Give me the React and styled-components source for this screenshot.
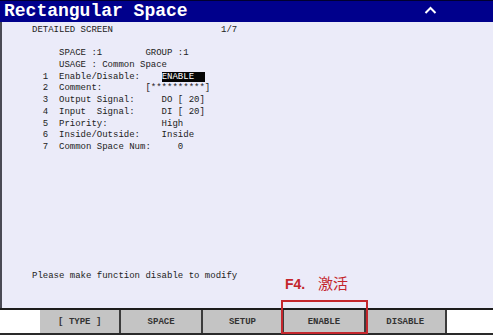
import React from "react";
import styled, { createGlobalStyle } from "styled-components";

const Global = createGlobalStyle`
  html, body { margin: 0; padding: 0; background: #ffffff; }
  body { width: 493px; height: 336px; overflow: hidden; }
`;

const Screen = styled.div`
  position: relative;
  width: 493px;
  height: 336px;
  display: flex;
  flex-direction: column;
  font-family: "Liberation Mono", "DejaVu Sans Mono", monospace;
  background: #ffffff;
`;

const TitleBar = styled.div`
  height: 21px;
  border-top: 1px solid #000030;
  background: #00008c;
  display: flex;
  align-items: center;
  justify-content: space-between;
  padding: 0 56px 0 4px;
  box-sizing: content-box;
`;

const Title = styled.div`
  color: #ffffff;
  font-weight: bold;
  font-size: 18px;
  line-height: 21px;
`;

const Caret = styled.svg`
  width: 13px;
  height: 8px;
  margin-top: -4px;
`;

const Body = styled.div`
  flex: 1;
  background: #ebebf9;
  border-left: 2px solid #4a4a55;
  padding: 3px 0 0 30px;
  display: flex;
  flex-direction: column;
  color: #222222;
  font-size: 9px;
`;

const Line = styled.div`
  height: 11.7px;
  line-height: 11.7px;
  white-space: pre;
`;

const Highlight = styled.span`
  background: #050505;
  color: #ffffff;
`;

const Spacer = styled.div`
  flex: 1;
`;

const Message = styled(Line)`
  margin-bottom: 25px;
`;

const Rule = styled.div`
  height: 2px;
  background: #1c1c1c;
`;

const KeyBar = styled.div`
  height: 23px;
  border-bottom: 2px solid #2a2a2a;
  display: grid;
  grid-template-columns: 40px repeat(5, 81.4px) 1fr;
  background: #ffffff;
  margin-bottom: 1px;
`;

const Blank = styled.div`
  background: #ffffff;
`;

const Key = styled.div`
  background: #c4c4c4;
  border-right: 2px solid #3c3c3c;
  display: flex;
  align-items: center;
  justify-content: center;
  font-size: 9px;
  font-weight: bold;
  color: #333333;
  white-space: pre;
  padding-top: 1px;
`;

const Callout = styled.div`
  position: absolute;
  left: 285px;
  top: 275px;
  color: #c4262c;
  font-family: "Liberation Sans", "Noto Sans CJK SC", sans-serif;
  font-weight: bold;
  font-size: 14px;
  line-height: 16px;
  white-space: pre;
`;

const CalloutCjk = styled.span`
  font-family: "Noto Sans CJK SC", sans-serif;
  font-weight: normal;
  font-size: 15px;
  margin-left: 5px;
`;

const RedBox = styled.div`
  position: absolute;
  left: 281px;
  top: 300px;
  width: 83px;
  height: 30px;
  border: 2px solid #c4262c;
`;

const lines = [
  "DETAILED SCREEN                    1/7",
  "",
  "     SPACE :1        GROUP :1",
  "     USAGE : Common Space",
  null,
  "  2  Comment:        [**********]",
  "  3  Output Signal:     DO [ 20]",
  "  4  Input  Signal:     DI [ 20]",
  "  5  Priority:          High",
  "  6  Inside/Outside:    Inside",
  "  7  Common Space Num:     0",
];

const keys = ["[ TYPE ]", "SPACE", "SETUP", "ENABLE", "DISABLE"];

export default function App() {
  return (
    <Screen>
      <Global />
      <TitleBar>
        <Title>Rectangular Space</Title>
        <Caret viewBox="0 0 13 8">
          <path d="M1.5 7 L6.5 2 L11.5 7" fill="none" stroke="#ffffff" strokeWidth="2" />
        </Caret>
      </TitleBar>
      <Body>
        {lines.map((l, i) =>
          l === null ? (
            <Line key={i}>
              {"  1  Enable/Disable:    "}
              <Highlight>{"ENABLE  "}</Highlight>
            </Line>
          ) : (
            <Line key={i}>{l}</Line>
          )
        )}
        <Spacer />
        <Message>Please make function disable to modify</Message>
      </Body>
      <Rule />
      <KeyBar>
        <Blank />
        {keys.map((k) => (
          <Key key={k}>{k}</Key>
        ))}
        <Blank />
      </KeyBar>
      <Callout>
        {"F4.  "}
        <CalloutCjk>激活</CalloutCjk>
      </Callout>
      <RedBox />
    </Screen>
  );
}
